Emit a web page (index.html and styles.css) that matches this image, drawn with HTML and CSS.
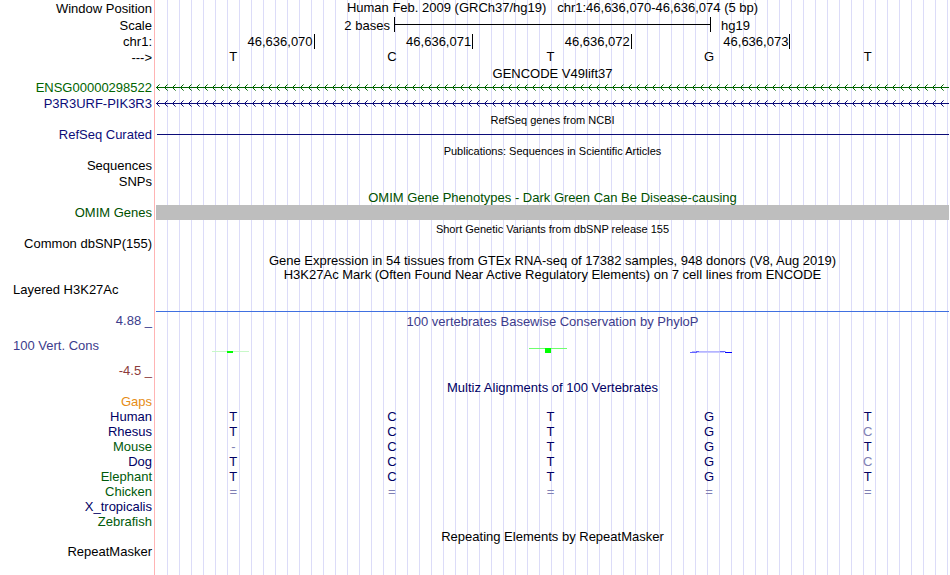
FILE: index.html
```
<!DOCTYPE html>
<html lang="en">
<head>
    <meta charset="UTF-8">
    <meta name="viewport" content="width=device-width, initial-scale=1.0">
    <title>Human chr1:46,636,070-46,636,074 Genome Browser</title>
    <link rel="stylesheet" href="styles.css">
</head>
<body>
    <main class="browser">
        <!-- Ruler -->
        <div class="row row-tall">
            <div class="label">Window Position</div>
            <h1 class="title">Human Feb. 2009 (GRCh37/hg19) &nbsp; chr1:46,636,070-46,636,074 (5 bp)</h1>
        </div>
        <div class="row row-tall">
            <div class="label">Scale</div>
            <div class="scale">
                <span class="scale-size">2 bases</span>
                <span class="scale-bar"></span>
                <span class="scale-db">hg19</span>
            </div>
        </div>
        <div class="row row-medium">
            <div class="label">chr1:</div>
            <div class="bases">
                <span class="position">46,636,070</span>
                <span class="position">46,636,071</span>
                <span class="position">46,636,072</span>
                <span class="position">46,636,073</span>
                <span></span>
            </div>
        </div>
        <div class="row row-medium">
            <div class="label">---&gt;</div>
            <div class="bases">
                <span class="base">T</span>
                <span class="base">C</span>
                <span class="base">T</span>
                <span class="base">G</span>
                <span class="base">T</span>
            </div>
        </div>

        <!-- GENCODE -->
        <h2 class="title title-short">GENCODE V49lift37</h2>
        <div class="row row-medium green">
            <div class="label">ENSG00000298522</div>
            <svg class="gene" aria-hidden="true">
                <defs>
                    <pattern id="arrowsGreen" width="8" height="16" patternUnits="userSpaceOnUse">
                        <path d="M0 7h8v1H0zM1 6h1v1H1zM1 8h1v1H1zM2 5h1v1H2zM2 9h1v1H2z"/>
                        <path class="arrow-tip" d="M3 4h1v1H3zM3 10h1v1H3z"/>
                    </pattern>
                </defs>
                <rect width="100%" height="16" fill="url(#arrowsGreen)"/>
            </svg>
        </div>
        <div class="row row-medium blue">
            <div class="label">P3R3URF-PIK3R3</div>
            <svg class="gene" aria-hidden="true">
                <defs>
                    <pattern id="arrowsBlue" width="8" height="16" patternUnits="userSpaceOnUse">
                        <path d="M0 7h8v1H0zM1 6h1v1H1zM1 8h1v1H1zM2 5h1v1H2zM2 9h1v1H2z"/>
                        <path class="arrow-tip" d="M3 4h1v1H3zM3 10h1v1H3z"/>
                    </pattern>
                </defs>
                <rect width="100%" height="16" fill="url(#arrowsBlue)"/>
            </svg>
        </div>

        <!-- RefSeq -->
        <h2 class="title title-small">RefSeq genes from NCBI</h2>
        <div class="row blue">
            <div class="label">RefSeq Curated</div>
            <div class="refseq-line"></div>
        </div>

        <!-- Publications -->
        <h2 class="title title-small title-tall">Publications: Sequences in Scientific Articles</h2>
        <div class="row row-medium">
            <div class="label">Sequences</div>
        </div>
        <div class="row row-medium">
            <div class="label">SNPs</div>
        </div>

        <!-- OMIM -->
        <h2 class="title dark-green">OMIM Gene Phenotypes - Dark Green Can Be Disease-causing</h2>
        <div class="row dark-green">
            <div class="label">OMIM Genes</div>
            <div class="omim-bar"></div>
        </div>

        <!-- Variants -->
        <h2 class="title title-small title-tall">Short Genetic Variants from dbSNP release 155</h2>
        <div class="row">
            <div class="label">Common dbSNP(155)</div>
        </div>

        <!-- Expression and regulation -->
        <h2 class="title title-tall">Gene Expression in 54 tissues from GTEx RNA-seq of 17382 samples, 948 donors (V8, Aug 2019)</h2>
        <h2 class="title">H3K27Ac Mark (Often Found Near Active Regulatory Elements) on 7 cell lines from ENCODE</h2>
        <div class="row histone">
            <div class="label label-left">Layered H3K27Ac</div>
            <div class="histone-line"></div>
        </div>

        <!-- Conservation -->
        <div class="row conservation">
            <div class="axis">
                <span>4.88 _</span>
                <span class="axis-name">100 Vert. Cons</span>
                <span class="axis-min">-4.5 _</span>
            </div>
            <div class="plot">
                <h2 class="plot-title">100 vertebrates Basewise Conservation by PhyloP</h2>
                <div class="bases">
                    <svg class="logo" viewBox="0 0 60 10" aria-hidden="true">
                        <path fill="#c8f8c8" d="M6 5h37v1H6z"/>
                        <path fill="#00ff00" d="M21 5h6v2h-6z"/>
                    </svg>
                    <span></span>
                    <svg class="logo" viewBox="0 0 60 10" aria-hidden="true">
                        <path fill="#6eff6e" d="M6 2h38v1H6z"/>
                        <path fill="#00ff00" d="M22 2h6v5h-6z"/>
                    </svg>
                    <svg class="logo" viewBox="0 0 60 10" aria-hidden="true">
                        <path fill="#b4b4ff" d="M10 5h34v1H10z"/>
                        <path fill="#c8c8ff" d="M14 6h28v1H14z"/>
                        <path fill="#6464ff" d="M8 6h7v1H8zM14 5h3v1h-3zM38 5h5v1h-5z"/>
                        <path fill="#0000ff" d="M43 6h7v1h-7z"/>
                    </svg>
                    <span></span>
                </div>
            </div>
        </div>

        <!-- Multiz -->
        <h2 class="title title-short navy">Multiz Alignments of 100 Vertebrates</h2>
        <table class="alignment navy">
            <tr><th class="orange" scope="row">Gaps</th><td></td><td></td><td></td><td></td><td></td></tr>
            <tr><th scope="row">Human</th><td>T</td><td>C</td><td>T</td><td>G</td><td>T</td></tr>
            <tr><th scope="row">Rhesus</th><td>T</td><td>C</td><td>T</td><td>G</td><td class="diff">C</td></tr>
            <tr><th class="species-green" scope="row">Mouse</th><td class="diff">-</td><td>C</td><td>T</td><td>G</td><td>T</td></tr>
            <tr><th scope="row">Dog</th><td>T</td><td>C</td><td>T</td><td>G</td><td class="diff">C</td></tr>
            <tr><th class="species-green" scope="row">Elephant</th><td>T</td><td>C</td><td>T</td><td>G</td><td>T</td></tr>
            <tr><th class="species-green" scope="row">Chicken</th><td class="diff">=</td><td class="diff">=</td><td class="diff">=</td><td class="diff">=</td><td class="diff">=</td></tr>
            <tr><th scope="row">X_tropicalis</th><td></td><td></td><td></td><td></td><td></td></tr>
            <tr><th class="species-green" scope="row">Zebrafish</th><td></td><td></td><td></td><td></td><td></td></tr>
        </table>

        <!-- Repeats -->
        <h2 class="title">Repeating Elements by RepeatMasker</h2>
        <div class="row">
            <div class="label">RepeatMasker</div>
        </div>
    </main>
</body>
</html>
```

FILE: styles.css
```
body {
    margin: 0;
    background: #ffffff;
    color: #000000;
    font-family: "Liberation Sans", Arial, Helvetica, sans-serif;
    font-size: 13px;
    line-height: 15px;
}

/* Pink divider after the labels, guide lines behind the tracks */
.browser {
    box-sizing: border-box;
    min-height: 100vh;
    padding-right: 1px;
    background:
        linear-gradient(#ffb4b4, #ffb4b4) 154px 0 / 1px 100% no-repeat,
        repeating-linear-gradient(to right, transparent 0 11px, #dcdcf8 11px 12px) 156px 0 / 100% 100% no-repeat;
}

.row {
    display: grid;
    grid-template-columns: 156px 1fr;
    height: 15px;
}

.row-medium {
    height: 16px;
    line-height: 16px;
}

.row-tall {
    height: 17px;
    line-height: 17px;
}

.label {
    padding-right: 4px;
    text-align: right;
    white-space: nowrap;
}

.label-left {
    padding-left: 13px;
    text-align: left;
}

.title {
    margin: 0 0 0 156px;
    height: 15px;
    line-height: 16px;
    font-size: 13px;
    font-weight: normal;
    text-align: center;
    white-space: nowrap;
}

.row .title {
    margin: 0;
}

.title-short {
    height: 14px;
}

.title-small {
    font-size: 11px;
}

.title-tall {
    height: 16px;
    line-height: 19px;
}

/* Ruler */
.scale {
    display: grid;
    grid-template-columns: 3fr 4fr 3fr;
}

.scale-size {
    padding-right: 4px;
    text-align: right;
}

.scale-bar {
    height: 15px;
    border: solid #000000;
    border-width: 0 1px;
    background: linear-gradient(#000000, #000000) 0 7px / 100% 1px no-repeat;
}

.scale-db {
    padding-left: 10px;
}

.bases {
    display: grid;
    grid-template-columns: repeat(5, 1fr);
}

.position {
    height: 15px;
    padding-right: 1px;
    border-right: 1px solid #000000;
    text-align: right;
}

.base {
    padding-right: 4px;
    line-height: 14px;
    text-align: center;
}

/* Gene tracks */
.gene {
    display: block;
    width: 100%;
    height: 16px;
    fill: currentColor;
    shape-rendering: crispEdges;
}

.arrow-tip {
    opacity: 0.6;
}

.refseq-line {
    height: 1px;
    margin: 7px 0 0 1px;
    background: #0c0c78;
}

.omim-bar {
    background: #bebebe;
}

.histone {
    height: 30px;
}

.histone-line {
    align-self: end;
    height: 1px;
    background: #4070e0;
}

/* Conservation plot */
.conservation {
    height: 68px;
    color: #3c3c8c;
}

.axis {
    display: flex;
    flex-direction: column;
    justify-content: space-between;
    padding: 1px 4px 2px 13px;
    text-align: right;
}

.axis-name {
    text-align: left;
}

.axis-min {
    color: #8c3c3c;
}

.plot-title {
    margin: 2px 0 17px;
    font-size: 13px;
    font-weight: normal;
    text-align: center;
}

.logo {
    width: 60px;
    height: 10px;
    margin-left: 2px;
    justify-self: center;
    shape-rendering: crispEdges;
}

/* Alignment */
.alignment {
    width: 100%;
    table-layout: fixed;
    border-collapse: collapse;
}

.alignment th {
    width: 152px;
    padding: 0 4px 0 0;
    font-weight: normal;
    text-align: right;
}

.alignment td {
    height: 15px;
    padding: 0 4px 0 0;
    text-align: center;
}

.green {
    color: #006400;
}

.dark-green {
    color: #005000;
}

.alignment .species-green {
    color: #005a0a;
}

.blue {
    color: #0c0c78;
}

.navy {
    color: #000064;
}

.alignment .orange {
    color: #e68c14;
}

.alignment .diff {
    color: #8080b4;
}
```
